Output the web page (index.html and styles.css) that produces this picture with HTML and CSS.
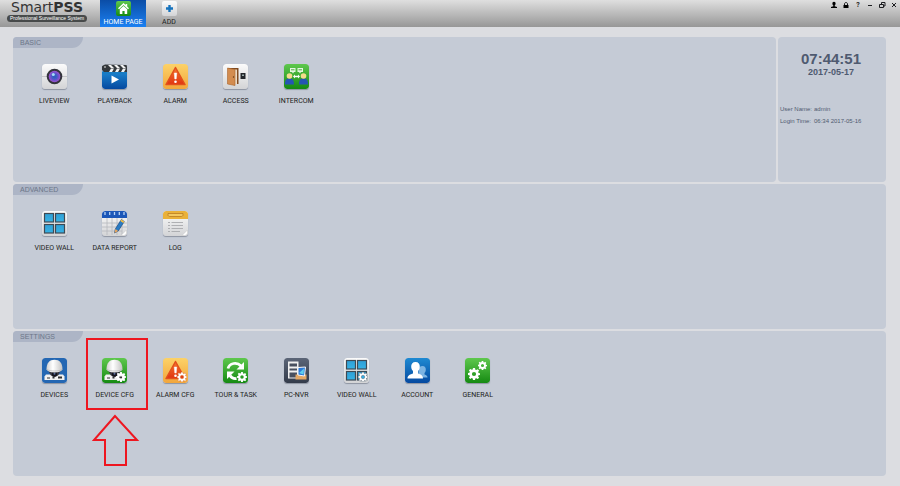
FILE: index.html
```
<!DOCTYPE html>
<html lang="en">
<head>
  <meta charset="UTF-8">
  <title>SmartPSS</title>
  <link rel="stylesheet" href="styles.css">
</head>
<body>
<!-- shared gradients and shapes for the icons -->
<svg class="defs" aria-hidden="true">
  <defs>
    <linearGradient id="white" x1="0" y1="0" x2="0" y2="1"><stop offset="0" stop-color="#fbfbfb"/><stop offset="1" stop-color="#d3d4d6"/></linearGradient>
    <linearGradient id="green" x1="0" y1="0" x2="0" y2="1"><stop offset="0" stop-color="#5fc84e"/><stop offset="1" stop-color="#158a12"/></linearGradient>
    <linearGradient id="blue" x1="0" y1="0" x2="0" y2="1"><stop offset="0" stop-color="#1f8ad2"/><stop offset="1" stop-color="#0549a0"/></linearGradient>
    <linearGradient id="yellow" x1="0" y1="0" x2="0" y2="1"><stop offset="0" stop-color="#fcd268"/><stop offset="1" stop-color="#f2a63c"/></linearGradient>
    <linearGradient id="red" x1="0" y1="0" x2="0" y2="1"><stop offset="0" stop-color="#f4762e"/><stop offset="1" stop-color="#e03410"/></linearGradient>
    <linearGradient id="dark" x1="0" y1="0" x2="0" y2="1"><stop offset="0" stop-color="#5b6577"/><stop offset="1" stop-color="#333b4a"/></linearGradient>
    <linearGradient id="screen" x1="0" y1="0" x2="0" y2="1"><stop offset="0" stop-color="#2f9fd6"/><stop offset="1" stop-color="#37b2e4"/></linearGradient>
    <linearGradient id="dome" x1="0" y1="0" x2="1" y2="0"><stop offset="0" stop-color="#cfcfcf"/><stop offset=".4" stop-color="#fff"/><stop offset="1" stop-color="#c4c4c4"/></linearGradient>
    <radialGradient id="lens"><stop offset="0" stop-color="#63b6f2"/><stop offset=".45" stop-color="#4a56c8"/><stop offset="1" stop-color="#a050d0"/></radialGradient>
    <symbol id="gear" viewBox="0 0 20 20">
      <path fill-rule="evenodd" d="M8.300 0h3.400l.5 2.800 1.600.7L16.100 1.900l2.400 2.400-1.600 2.300.7 1.600 2.400.5v3l-2.500.5-.7 1.600 1.700 2.400-2.300 2.300-2.400-1.600-1.600.7-.5 2.400H8.300l-.5-2.500-1.600-.7-2.400 1.700-2.300-2.300 1.600-2.400-.7-1.600L0 11.700V8.300l2.400-.5.7-1.600-1.600-2.400 2.300-2.300 2.400 1.600 1.600-.7zM10 6.500a3.500 3.500 0 1 0 0 7 3.500 3.500 0 0 0 0-7z"/>
    </symbol>
    <symbol id="camera" viewBox="0 0 25 25">
      <path d="M2.500 18.500l1.500-2h17l1.500 2v3.500h-20z" fill="#f1f1f1"/>
      <path d="M5 19.500h3v1H5zM10.500 18.500h2v2h-2zM16 18.500h4v2h-4z" fill="#333"/>
      <path d="M6.500 13h12l-1.500 3c-1.500 3.500-7.500 3.500-9 0z" fill="#3b3b44"/>
      <circle cx="12.500" cy="16" r="2.700" fill="#14141c"/>
      <circle cx="12.500" cy="15.700" r="1" fill="#5a6c98"/>
      <path d="M4.500 11.500C4.500 5 7.500 1.800 12.500 1.800s8 3.200 8 9.700c-1 2-4 3-8 3s-7-1-8-3z" fill="url(#dome)"/>
      <path d="M5 11.500c3 2 12 2 15 0" fill="none" stroke="#b5b5b5" stroke-width=".7"/>
    </symbol>
    <symbol id="warning" viewBox="0 0 25 25">
      <path d="M12.500 3.500L22 20.500H3z" fill="url(#red)" stroke="#e2501c" stroke-width="1.500" stroke-linejoin="round"/>
      <path d="M11.300 9h2.400l-.5 6h-1.400z" fill="#fff" stroke="#fff" stroke-width=".5"/>
      <circle cx="12.500" cy="17.700" r="1.300" fill="#fff"/>
    </symbol>
    <symbol id="wall" viewBox="0 0 25 25">
      <rect width="25" height="25" rx="3" fill="url(#white)"/>
      <g fill="url(#screen)" stroke="#3d4a55" stroke-width="1.200">
        <rect x="2.500" y="2.500" width="9" height="8.500"/>
        <rect x="13.500" y="2.500" width="9" height="8.500"/>
        <rect x="2.500" y="13.500" width="9" height="8.500"/>
        <rect x="13.500" y="13.500" width="9" height="8.500"/>
      </g>
    </symbol>
  </defs>
</svg>

<header class="header">
  <div class="logo">
    <div class="logo-name">Smart<b>PSS</b></div>
    <div class="logo-sub">Professional Surveillance System</div>
  </div>
  <nav class="tabs">
    <button class="tab tab-active" type="button">
      <svg class="tab-icon" viewBox="0 0 15 15">
        <rect width="15" height="15" rx="2" fill="url(#green)"/>
        <path d="M7.500 2L2 7.200l1 1L7.500 4 12 8.200l1-1-1.800-1.700V3H9.700v1z" fill="#fff"/>
        <path d="M3.800 8.300L7.500 5l3.700 3.300V13H8.600v-3H6.400v3H3.800z" fill="#fff"/>
      </svg>
      HOME PAGE
    </button>
    <button class="tab" type="button">
      <svg class="tab-icon" viewBox="0 0 15 15">
        <rect width="15" height="15" rx="2" fill="url(#white)"/>
        <path d="M6.300 4h2.400v2.300H11v2.400H8.700V11H6.300V8.700H4V6.300h2.300z" fill="#1673bd"/>
      </svg>
      ADD
    </button>
  </nav>
  <div class="window-buttons">
    <button type="button" aria-label="User"><svg viewBox="0 0 8 8"><path d="M4 .8c1.100 0 1.600.8 1.600 1.700S5 4.200 4.700 4.400v.8L7 6v1H1V6l2.300-.8v-.8C3 4.200 2.400 3.400 2.400 2.500S2.900.8 4 .8z"/></svg></button>
    <button type="button" aria-label="Lock"><svg viewBox="0 0 8 8"><path d="M1.500 4h5v3h-5z"/><path d="M2.500 4V3c0-2 3-2 3 0v1" class="line"/></svg></button>
    <button type="button" aria-label="Help">?</button>
    <button type="button" aria-label="Minimize"><svg viewBox="0 0 8 8"><path d="M2 4.500h4" class="line"/></svg></button>
    <button type="button" aria-label="Restore"><svg viewBox="0 0 8 8"><path d="M1.500 3.500h4v3h-4zM3.500 3V1.500h3.500v3.500H6" class="line"/></svg></button>
    <button type="button" aria-label="Close"><svg viewBox="0 0 8 8"><path d="M2 2l4 4M6 2L2 6" class="line"/></svg></button>
  </div>
</header>

<main class="main">
  <div class="top-row">
    <section class="panel">
      <h2 class="panel-title">BASIC</h2>
      <div class="tiles">
        <button class="tile" type="button">
          <svg class="icon" viewBox="0 0 25 25">
            <rect width="25" height="25" rx="3" fill="url(#white)"/>
            <path d="M0 12.500h25" stroke="#b8b8bb" stroke-width=".7"/>
            <circle cx="12.500" cy="12.500" r="7.800" fill="#33343c"/>
            <circle cx="12.500" cy="12.500" r="5.800" fill="url(#lens)"/>
            <circle cx="12.500" cy="12.500" r="2.300" fill="#355cc0"/>
            <circle cx="11.300" cy="10.500" r="1.500" fill="#a6dcf8"/>
          </svg>
          LIVEVIEW
        </button>
        <button class="tile" type="button">
          <svg class="icon" viewBox="0 0 25 25">
            <rect y="6" width="25" height="19" rx="3" fill="url(#blue)"/>
            <path d="M0 8h25v2H0z" fill="#187cc4"/>
            <path d="M0 2l3-1.500L25 1v7H2L0 6z" fill="#34383c"/>
            <path d="M6 1h3l3 3H9zM12 1h3l3 3h-3zM18 1h3l3 3h-3zM7 8l2-3.500h3L10 8zM13 8l2-3.500h3L16 8zM19 8l2-3.500h3L22 8z" fill="#f3f3f3"/>
            <circle cx="3" cy="3" r="1" fill="#aaa"/>
            <path d="M9.500 11.500v8l7.500-4z" fill="#fff"/>
          </svg>
          PLAYBACK
        </button>
        <button class="tile" type="button">
          <svg class="icon" viewBox="0 0 25 25">
            <rect width="25" height="25" rx="3" fill="url(#yellow)"/>
            <use href="#warning"/>
          </svg>
          ALARM
        </button>
        <button class="tile" type="button">
          <svg class="icon" viewBox="0 0 25 25">
            <rect width="25" height="25" rx="3" fill="url(#white)"/>
            <path d="M5 4h10.500v16H5z" fill="#7f4a20"/>
            <path d="M8.500 5.500H14V20H8.500z" fill="#eddac4"/>
            <path d="M4.500 4L12 5.500V21.500L4.500 20z" fill="#d38c4f" stroke="#a9652e" stroke-width=".6"/>
            <circle cx="10.500" cy="13" r=".7" fill="#5b3412"/>
            <path d="M17.500 9h5v6h-5z" fill="#23262b"/>
            <path d="M19 10.500h2v1.500h-2z" fill="#9aa"/>
          </svg>
          ACCESS
        </button>
        <button class="tile" type="button">
          <svg class="icon" viewBox="0 0 25 25">
            <rect width="25" height="25" rx="3" fill="url(#green)"/>
            <path d="M6 4h5.500v4H10l-1 1.500L8 8H6zM13.500 4H19v4h-2l-1 1.500L15 8h-1.500z" fill="#e6f7e2"/>
            <path d="M7 5.800h3.500M14.500 5.800H18" stroke="#4eae42"/>
            <path d="M1 20.500c0-5 1.500-6 4.500-6s4.500 1 4.500 6zM15 20.500c0-5 1.500-6 4.500-6s4.500 1 4.500 6z" fill="#2555b4"/>
            <circle cx="5.500" cy="12" r="2.800" fill="#f3dc8c"/>
            <circle cx="19.500" cy="12" r="2.800" fill="#f3dc8c"/>
            <path d="M9 12.500l2-2v1.300h3v-1.300l2 2-2 2v-1.300h-3v1.300z" fill="#fff"/>
          </svg>
          INTERCOM
        </button>
      </div>
    </section>
    <aside class="panel info">
      <time class="clock">07:44:51</time>
      <time class="date">2017-05-17</time>
      <dl class="login">
        <dt>User Name:</dt><dd>admin</dd>
        <dt>Login Time:</dt><dd>06:34 2017-05-16</dd>
      </dl>
    </aside>
  </div>

  <section class="panel">
    <h2 class="panel-title">ADVANCED</h2>
    <div class="tiles">
      <button class="tile" type="button">
        <svg class="icon" viewBox="0 0 25 25"><use href="#wall"/></svg>
        VIDEO WALL
      </button>
      <button class="tile" type="button">
        <svg class="icon" viewBox="0 0 25 25">
          <rect width="25" height="25" rx="3" fill="url(#white)"/>
          <path d="M0 12h25M0 16h25M0 20h20M5 7v17M10 7v17M15 7v17M20 7v17" stroke="#b5b7bc" stroke-width=".8"/>
          <path d="M0 7V3a3 3 0 0 1 3-3h19a3 3 0 0 1 3 3v4z" fill="#1c57b8"/>
          <path d="M3 1v3M7.700 1v3M12.500 1v3M17.300 1v3M22 1v3" stroke="#b9d4f5" stroke-width="1.300"/>
          <path d="M19 24.500l5.500-5.500v3a3 3 0 0 1-3 2.500z" fill="#fff" stroke="#c5c5c5" stroke-width=".5"/>
          <path d="M12.500 22l.8-4 6-9.500 3 2-6 9.500z" fill="#2a7cc4" stroke="#123f77" stroke-width=".6"/>
          <path d="M19.300 8.500l3 2-1 1.500-3-2z" fill="#f2bd45"/>
          <path d="M12.500 22l.8-4 3 2z" fill="#e8a55b"/>
        </svg>
        DATA REPORT
      </button>
      <button class="tile" type="button">
        <svg class="icon" viewBox="0 0 25 25">
          <rect width="25" height="25" rx="3" fill="url(#white)"/>
          <path d="M0 8V3a3 3 0 0 1 3-3h19a3 3 0 0 1 3 3v5z" fill="#eab138"/>
          <path d="M5 2.500h15v1.500c0 1-1 1.500-2 1.500H7c-1 0-2-.5-2-1.500z" fill="#f4c95f" stroke="#b97b22" stroke-width=".8"/>
          <path d="M5 11.500h2M5 14.500h2M5 17.500h2M5 20.500h2M8.500 11.500H20M8.500 14.500H20M8.500 17.500H20M8.500 20.500H17" stroke="#a8a9ad" stroke-width=".9"/>
          <path d="M19 24.500l5.500-5.500v3a3 3 0 0 1-3 2.500z" fill="#fff" stroke="#c5c5c5" stroke-width=".5"/>
        </svg>
        LOG
      </button>
    </div>
  </section>

  <section class="panel">
    <h2 class="panel-title">SETTINGS</h2>
    <div class="tiles">
      <button class="tile" type="button">
        <svg class="icon" viewBox="0 0 25 25">
          <rect width="25" height="25" rx="3" fill="#2467b3"/>
          <use href="#camera"/>
        </svg>
        DEVICES
      </button>
      <button class="tile" type="button">
        <svg class="icon" viewBox="0 0 25 25">
          <rect width="25" height="25" rx="3" fill="url(#green)"/>
          <use href="#camera"/>
          <use href="#gear" x="14" y="14" width="10" height="10" fill="#fff"/>
        </svg>
        DEVICE CFG
        <!-- callout box and arrow -->
        <svg class="callout" viewBox="0 0 62 130">
          <path d="M1 1h60v70H1zM29 78L8 102h11v25h21v-25h11z"/>
        </svg>
      </button>
      <button class="tile" type="button">
        <svg class="icon" viewBox="0 0 25 25">
          <rect width="25" height="25" rx="3" fill="url(#yellow)"/>
          <use href="#warning"/>
          <use href="#gear" x="14" y="14" width="10" height="10" fill="#fff" stroke="#d8783a"/>
        </svg>
        ALARM CFG
      </button>
      <button class="tile" type="button">
        <svg class="icon" viewBox="0 0 25 25">
          <rect width="25" height="25" rx="3" fill="url(#green)"/>
          <path d="M5 10.500C6.500 5 14 3.500 18 8" fill="none" stroke="#fff" stroke-width="2.800"/>
          <path d="M21 4v7.500h-7.500z" fill="#fff"/>
          <path d="M13.500 20.500c-3 .5-5-.5-6.500-3" fill="none" stroke="#fff" stroke-width="2.800"/>
          <path d="M4 21v-7.500h7.500z" fill="#fff"/>
          <use href="#gear" x="14" y="14" width="10" height="10" fill="#fff"/>
        </svg>
        TOUR &amp; TASK
      </button>
      <button class="tile" type="button">
        <svg class="icon" viewBox="0 0 25 25">
          <rect width="25" height="25" rx="3" fill="url(#dark)"/>
          <path d="M4 3.500h10.500v17H4z" fill="#f0f0f0"/>
          <path d="M5.500 5.500H13v3H5.500zM5.500 10.500H13v2H5.500zM5.500 14.500H13v5H5.500z" fill="#48505f"/>
          <path d="M11.500 16.500h11v5h-11z" fill="#e3a866"/>
          <path d="M14 9.500l7.500-.5-1 9-6.500-1z" fill="#2b79d8" stroke="#f5f5f5"/>
          <path d="M15 15l5-4.500-.5 6z" fill="#5fd0ee"/>
        </svg>
        PC-NVR
      </button>
      <button class="tile" type="button">
        <svg class="icon" viewBox="0 0 25 25">
          <use href="#wall"/>
          <use href="#gear" x="14" y="14" width="10" height="10" fill="#fff" stroke="#5f6c78"/>
        </svg>
        VIDEO WALL
      </button>
      <button class="tile" type="button">
        <svg class="icon" viewBox="0 0 25 25">
          <rect width="25" height="25" rx="3" fill="url(#blue)"/>
          <path d="M17.500 8c2.500 0 3.500 1.800 3.300 4-.1 1.500-.8 2.500-1.300 3v1.500c2 .8 3 1.500 3 3h-9V12c.5-2.500 1.500-4 4-4z" fill="#7db4e2"/>
          <path d="M10.500 4c3 0 4.500 2 4.300 5-.1 2-1 3.300-1.800 4v2.500c2.500 1 5 1.500 5 5H2.500c0-3.500 3-4 5.500-5V13c-.8-.7-1.700-2-1.800-4C6 6 7.500 4 10.500 4z" fill="#fff"/>
        </svg>
        ACCOUNT
      </button>
      <button class="tile" type="button">
        <svg class="icon" viewBox="0 0 25 25">
          <rect width="25" height="25" rx="3" fill="url(#green)"/>
          <use href="#gear" x="3" y="10" width="12" height="12" fill="#fff"/>
          <use href="#gear" x="13" y="3" width="9" height="9" fill="#fff"/>
        </svg>
        GENERAL
      </button>
    </div>
  </section>
</main>
</body>
</html>
```
FILE: styles.css
```
* {
  margin: 0;
  padding: 0;
  box-sizing: border-box;
}

body {
  min-height: 100vh;
  display: flex;
  flex-direction: column;
  background: #dcdde1;
  font-family: "Liberation Sans", Arial, sans-serif;
  font-size: 7px;
}

button {
  border: none;
  background: none;
  color: #1c1d20;
  font-family: Roboto, Arial, sans-serif;
  font-size: 7px;
  line-height: 10px;
  cursor: pointer;
}

.defs {
  position: absolute;
  width: 0;
  height: 0;
}

.header {
  height: 27px;
  display: flex;
  background: linear-gradient(#dfdfdf, #979797);
}

.logo {
  width: 100px;
  padding-left: 7px;
}

.logo-name {
  padding-left: 4px;
  color: #333;
  font-family: "DejaVu Sans", Verdana, sans-serif;
  font-size: 14px;
  line-height: 15px;
}

.logo-sub {
  width: 80px;
  border-radius: 4px;
  background: #474a4a;
  color: #fff;
  font-size: 5px;
  line-height: 7px;
  text-align: center;
  white-space: nowrap;
}

.tabs {
  display: flex;
}

.tab {
  width: 46px;
  display: flex;
  flex-direction: column;
  align-items: center;
  gap: 1px;
  padding-top: 1px;
  white-space: nowrap;
}

.tab-active {
  background: linear-gradient(#0b4da6, #1a80f2);
  color: #fff;
}

.tab-icon {
  width: 15px;
  height: 15px;
  flex-shrink: 0;
}

.window-buttons {
  height: 9px;
  display: flex;
  margin-left: auto;
}

.window-buttons button {
  width: 12px;
  display: flex;
  align-items: center;
  justify-content: center;
  font-weight: bold;
}

.window-buttons svg {
  width: 8px;
  height: 8px;
}

.line {
  fill: none;
  stroke: #1c1d20;
}

.main {
  flex: 1;
  display: grid;
  grid-template-rows: repeat(3, 1fr);
  gap: 2px;
  padding: 10px 14px 10px 13px;
}

.top-row {
  display: grid;
  grid-template-columns: 1fr 108px;
  gap: 2px;
}

.panel {
  border-radius: 4px;
  background: #c5cbd6;
}

.panel-title {
  width: 70px;
  padding: 1px 0 0 7px;
  border-radius: 4px 0 12px 0;
  background: #adb5c6;
  color: #6c7588;
  font-size: 7px;
  font-weight: normal;
  line-height: 10px;
}

.tiles {
  width: 484px;
  display: grid;
  grid-template-columns: repeat(8, 1fr);
  margin-left: 11px;
  padding-top: 16px;
}

.tile {
  position: relative;
  display: flex;
  flex-direction: column;
  align-items: center;
  gap: 7px;
  white-space: nowrap;
}

.icon {
  width: 25px;
  height: 25px;
  border-radius: 3px;
  box-shadow: 0 1px 1px #8d94a1;
}

.callout {
  position: absolute;
  top: -20px;
  left: 1px;
  width: 62px;
  height: 130px;
  fill: none;
  stroke: #ee1620;
  stroke-width: 2px;
  pointer-events: none;
}

.info {
  display: flex;
  flex-direction: column;
  padding: 13px 4px 0 2px;
  color: #4f5a70;
}

.clock,
.date {
  font-size: 15px;
  font-weight: bold;
  line-height: 17px;
  text-align: center;
}

.date {
  font-size: 9px;
  line-height: 11px;
}

.login {
  display: grid;
  grid-template-columns: 32px 1fr;
  gap: 0 2px;
  padding-top: 25px;
  font-size: 6px;
  line-height: 12px;
  white-space: nowrap;
}
```
